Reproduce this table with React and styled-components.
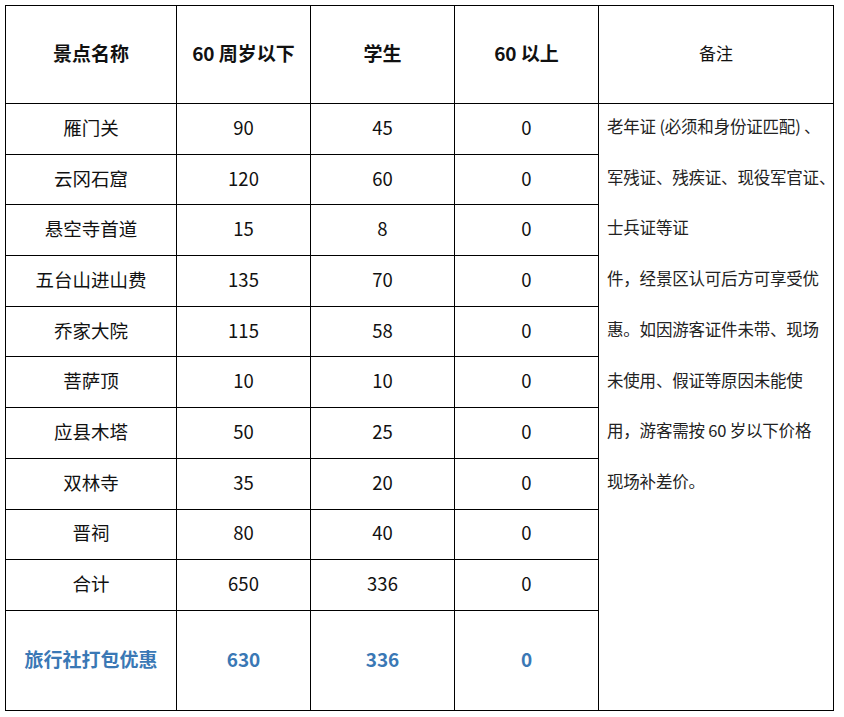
import React from 'react';
import styled, { createGlobalStyle } from 'styled-components';

const GlobalStyle = createGlobalStyle`
    body {
        margin: 0;
        background: #fff;
        font-family: "Noto Sans CJK SC", "Noto Sans", sans-serif;
        color: #111;
    }
`;

const Page = styled.div`
    padding: 5px;
`;

const PriceTable = styled.table`
    border-collapse: collapse;
    table-layout: fixed;
    width: 828px;
`;

const HeadRow = styled.tr`
    height: 98px;
`;

const Row = styled.tr`
    height: ${p => p.tall ? '100px' : '50.7px'};
`;

const HeadCell = styled.th`
    border: 1.5px solid #000;
    font-size: ${p => p.plain ? '17px' : '19px'};
    font-weight: ${p => p.plain ? 400 : 700};
    text-align: center;
    padding: 0 0 5px;
`;

const Cell = styled.td`
    border: 1.5px solid #000;
    font-size: ${p => p.blue ? '19px' : '18.5px'};
    text-align: center;
    padding: 0 0 4px;
    color: ${p => p.blue ? '#3a78b5' : '#111'};
    font-weight: ${p => p.blue ? 700 : 400};
`;

const NoteCell = styled.td`
    border: 1.5px solid #000;
    vertical-align: top;
    padding: 0 0 0 8px;
    font-size: 16.5px;
    line-height: 50.7px;
    white-space: nowrap;
    color: #222;
`;

const NoteLines = styled.div`
    margin-top: -3px;
    letter-spacing: -0.2px;
`;

const rows = [
    ['雁门关', 90, 45, 0],
    ['云冈石窟', 120, 60, 0],
    ['悬空寺首道', 15, 8, 0],
    ['五台山进山费', 135, 70, 0],
    ['乔家大院', 115, 58, 0],
    ['菩萨顶', 10, 10, 0],
    ['应县木塔', 50, 25, 0],
    ['双林寺', 35, 20, 0],
    ['晋祠', 80, 40, 0],
    ['合计', 650, 336, 0],
];

const noteLines = [
    '老年证 (必须和身份证匹配) 、',
    '军残证、残疾证、现役军官证、',
    '士兵证等证',
    '件，经景区认可后方可享受优',
    '惠。如因游客证件未带、现场',
    '未使用、假证等原因未能使',
    '用，游客需按 60 岁以下价格',
    '现场补差价。',
];

export default function App() {
    return (
        <Page>
            <GlobalStyle />
            <PriceTable>
                <colgroup>
                    <col style={{ width: 171 }} />
                    <col style={{ width: 134 }} />
                    <col style={{ width: 144 }} />
                    <col style={{ width: 144 }} />
                    <col style={{ width: 235 }} />
                </colgroup>
                <thead>
                    <HeadRow>
                        <HeadCell>景点名称</HeadCell>
                        <HeadCell>60 周岁以下</HeadCell>
                        <HeadCell>学生</HeadCell>
                        <HeadCell>60 以上</HeadCell>
                        <HeadCell plain>备注</HeadCell>
                    </HeadRow>
                </thead>
                <tbody>
                    {rows.map((r, i) => (
                        <Row key={r[0]}>
                            <Cell>{r[0]}</Cell>
                            <Cell>{r[1]}</Cell>
                            <Cell>{r[2]}</Cell>
                            <Cell>{r[3]}</Cell>
                            {i === 0 && (
                                <NoteCell rowSpan={11}>
                                    <NoteLines>
                                        {noteLines.map(l => <div key={l}>{l}</div>)}
                                    </NoteLines>
                                </NoteCell>
                            )}
                        </Row>
                    ))}
                    <Row tall>
                        <Cell blue>旅行社打包优惠</Cell>
                        <Cell blue>630</Cell>
                        <Cell blue>336</Cell>
                        <Cell blue>0</Cell>
                    </Row>
                </tbody>
            </PriceTable>
        </Page>
    );
}
